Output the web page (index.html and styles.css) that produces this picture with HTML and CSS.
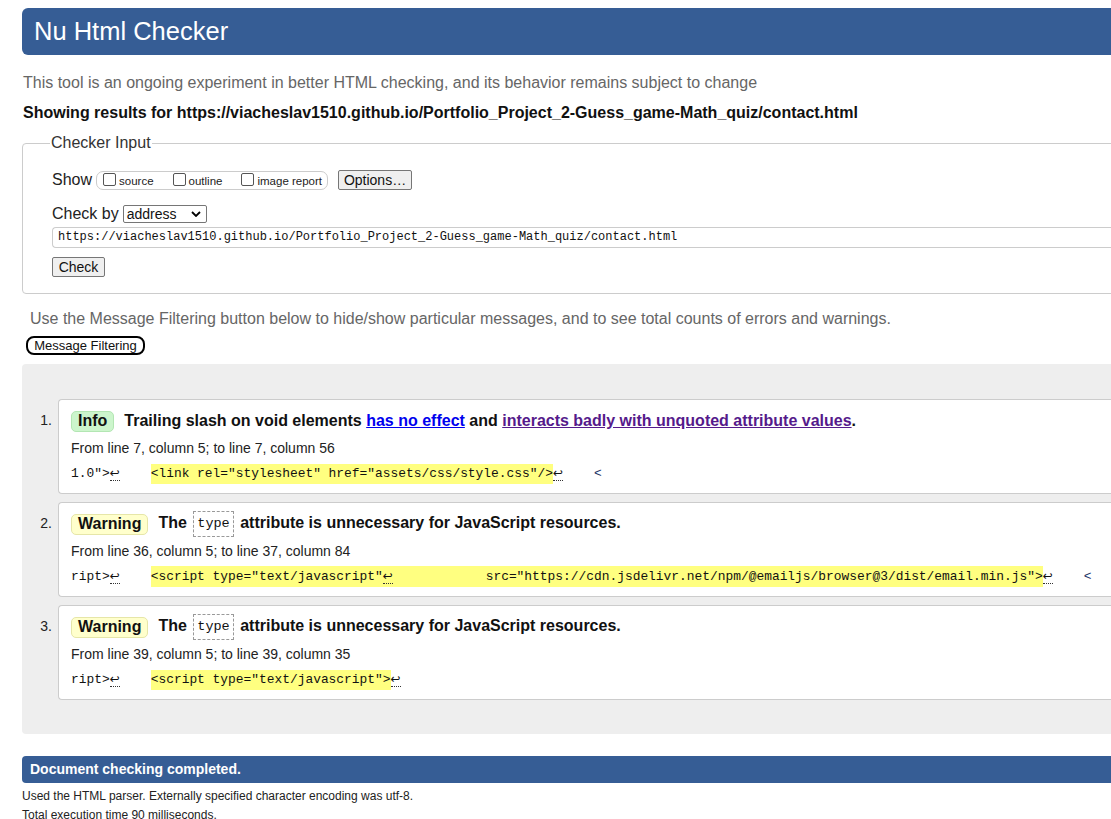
FILE: index.html
```html
<!DOCTYPE html>
<html lang="en">
<head>
<meta charset="utf-8">
<title>Nu Html Checker</title>
<link rel="stylesheet" href="styles.css">
</head>
<body>
<h1 class="title">Nu Html Checker</h1>
<p class="intro">This tool is an ongoing experiment in better HTML checking, and its behavior remains subject to change</p>
<p class="showing">Showing results for https://viacheslav1510.github.io/Portfolio_Project_2-Guess_game-Math_quiz/contact.html</p>

<fieldset class="checker">
  <legend class="legend">Checker Input</legend>
  <div class="show-row">
    <span class="label">Show</span>
    <span class="opts">
      <label class="opt"><span class="cb"></span><span class="opt-text">source</span></label>
      <label class="opt"><span class="cb"></span><span class="opt-text">outline</span></label>
      <label class="opt"><span class="cb"></span><span class="opt-text">image report</span></label>
    </span>
    <span class="btn btn-options">Options…</span>
  </div>
  <div class="by-row">
    <span class="label">Check by</span>
    <span class="select">address<svg class="chev" viewBox="0 0 10 6" width="10" height="6"><path d="M1 1l4 4 4-4" fill="none" stroke="#000" stroke-width="1.8"/></svg></span>
  </div>
  <div class="url-input">https://viacheslav1510.github.io/Portfolio_Project_2-Guess_game-Math_quiz/contact.html</div>
  <div class="check-row"><span class="btn btn-check">Check</span></div>
</fieldset>

<p class="filter-note">Use the Message Filtering button below to hide/show particular messages, and to see total counts of errors and warnings.</p>
<div class="filter-row"><span class="filter-btn">Message Filtering</span></div>

<div class="results">
  <div class="item">
    <span class="num">1.</span>
    <div class="msg">
      <p class="msg-head"><span class="badge badge-info">Info</span><span class="msg-text">Trailing slash on void elements <a class="link" href="#">has no effect</a> and <a class="link visited" href="#">interacts badly with unquoted attribute values</a>.</span></p>
      <p class="loc">From line 7, column 5; to line 7, column 56</p>
      <p class="extract">1.0"&gt;<span class="lf">↩</span>    <span class="hl">&lt;link rel="stylesheet" href="assets/css/style.css"/&gt;</span><span class="lf">↩</span>    <span class="lt">&lt;</span></p>
    </div>
  </div>
  <div class="item">
    <span class="num">2.</span>
    <div class="msg">
      <p class="msg-head"><span class="badge badge-warn">Warning</span><span class="msg-text">The <code class="code-box">type</code> attribute is unnecessary for JavaScript resources.</span></p>
      <p class="loc">From line 36, column 5; to line 37, column 84</p>
      <p class="extract">ript&gt;<span class="lf">↩</span>    <span class="hl">&lt;script type="text/javascript"<span class="lf">↩</span>            src="https://cdn.jsdelivr.net/npm/@emailjs/browser@3/dist/email.min.js"&gt;</span><span class="lf">↩</span>    <span class="lt">&lt;</span></p>
    </div>
  </div>
  <div class="item">
    <span class="num">3.</span>
    <div class="msg">
      <p class="msg-head"><span class="badge badge-warn">Warning</span><span class="msg-text">The <code class="code-box">type</code> attribute is unnecessary for JavaScript resources.</span></p>
      <p class="loc">From line 39, column 5; to line 39, column 35</p>
      <p class="extract">ript&gt;<span class="lf">↩</span>    <span class="hl">&lt;script type="text/javascript"&gt;</span><span class="lf">↩</span></p>
    </div>
  </div>
</div>

<h2 class="done">Document checking completed.</h2>
<p class="details">Used the HTML parser. Externally specified character encoding was utf-8.</p>
<p class="details">Total execution time 90 milliseconds.</p>
</body>
</html>
```
FILE: styles.css
```css
html {
  overflow: hidden;
  background: #fff;
}
body {
  margin: 0;
  padding: 8px 0 40px 22px;
  width: 1120px;
  font-family: "Liberation Sans", Arial, sans-serif;
  color: #111;
}
p { margin: 0; }

.title {
  margin: 0;
  height: 47px;
  line-height: 47px;
  padding-left: 12px;
  background: #365d95;
  color: #fff;
  font-size: 25.5px;
  font-weight: normal;
  border-radius: 6px;
}
.intro {
  margin-top: 18px;
  font-size: 16px;
  line-height: 20px;
  color: #666;
  padding-left: 1px;
}
.showing {
  margin-top: 10px;
  font-size: 16px;
  line-height: 20px;
  font-weight: bold;
  color: #111;
  padding-left: 1px;
}

.checker {
  margin: 10px 0 0 0;
  border: 1px solid #ccc;
  border-radius: 4px;
  padding: 16px 0 16px 29px;
  min-width: 0;
}
.legend {
  font-size: 16px;
  line-height: 20px;
  color: #333;
  padding: 0 1px;
  margin-left: -2px;
}
.label {
  font-size: 16px;
  color: #222;
}
.show-row {
  display: flex;
  align-items: center;
  height: 22px;
}
.opts {
  display: flex;
  align-items: center;
  margin-left: 4px;
  height: 17px;
  border: 1px solid #ccc;
  border-radius: 7px;
  padding: 0 5px 0 6px;
}
.opt {
  display: flex;
  align-items: center;
  font-size: 11.5px;
  color: #222;
  margin-right: 19px;
}
.opt:last-child { margin-right: 0; }
.cb {
  width: 11px;
  height: 11px;
  border: 1px solid #555;
  border-radius: 2px;
  background: #fff;
  margin-right: 3px;
  margin-top: -2px;
}
.opt-text { padding-top: 2px; }
.btn {
  display: inline-flex;
  align-items: center;
  justify-content: center;
  height: 18px;
  border: 1px solid #767676;
  border-radius: 2px;
  background: #efefef;
  font-size: 14px;
  color: #111;
}
.btn-options {
  margin-left: 10px;
  width: 72px;
}
.by-row {
  display: flex;
  align-items: center;
  height: 22px;
  margin-top: 12px;
}
.select {
  display: inline-flex;
  align-items: center;
  justify-content: space-between;
  margin-left: 4px;
  width: 74px;
  height: 16px;
  padding: 0 5px 0 3px;
  border: 1px solid #767676;
  border-radius: 2px;
  background: #fff;
  font-size: 14px;
  color: #111;
}
.chev { display: block; }
.url-input {
  margin-top: 2px;
  height: 19px;
  line-height: 19px;
  border: 1px solid #ccc;
  border-right: 0;
  border-radius: 4px 0 0 4px;
  padding-left: 5px;
  font-family: "Liberation Mono", "DejaVu Sans Mono", monospace;
  font-size: 12px;
  color: #111;
}
.check-row {
  margin-top: 9px;
  display: flex;
}
.btn-check {
  width: 51px;
}

.filter-note {
  margin-top: 15px;
  padding-left: 8px;
  font-size: 16px;
  line-height: 20px;
  color: #666;
}
.filter-row {
  margin-top: 7px;
  padding-left: 4px;
  display: flex;
}
.filter-btn {
  display: inline-flex;
  align-items: center;
  justify-content: center;
  width: 115px;
  height: 15px;
  border: 2px solid #000;
  border-radius: 8px;
  background: #fff;
  font-size: 13px;
  color: #111;
}

.results {
  margin-top: 9px;
  background: #eee;
  border-radius: 4px 0 0 4px;
  padding: 35px 0 34px 0;
  display: flex;
  flex-direction: column;
  gap: 8px;
}
.item {
  display: flex;
  align-items: flex-start;
}
.num {
  width: 36px;
  box-sizing: border-box;
  padding: 11px 6px 0 0;
  text-align: right;
  font-size: 14px;
  line-height: 20px;
  color: #222;
}
.msg {
  flex: 1;
  background: #fff;
  border: 1px solid #ccc;
  border-right: 0;
  border-radius: 4px 0 0 4px;
  padding: 10px 0 9px 12px;
}
.msg-head {
  display: flex;
  align-items: center;
  height: 22px;
}
.badge {
  display: inline-flex;
  align-items: center;
  height: 19px;
  padding: 0 6px;
  border-radius: 5px;
  font-size: 16px;
  font-weight: bold;
  color: #111;
}
.badge-info {
  background: #ccf5cc;
  border: 1px solid #b3e6b3;
}
.badge-warn {
  background: #ffffcc;
  border: 1px solid #e6e6a8;
}
.msg-text {
  margin-left: 10px;
  font-size: 16px;
  font-weight: bold;
  color: #111;
}
.link { color: #0000ee; }
.link.visited { color: #551a8b; }
.code-box {
  display: inline-block;
  font-family: "Liberation Mono", "DejaVu Sans Mono", monospace;
  font-weight: normal;
  font-size: 13.5px;
  line-height: 18px;
  padding: 3px 3px;
  border: 1px dashed #999;
  vertical-align: middle;
  margin: 0 2px;
}
.loc {
  margin-top: 6px;
  font-size: 14px;
  line-height: 20px;
  color: #222;
}
.extract {
  margin-top: 5px;
  font-family: "Liberation Mono", "DejaVu Sans Mono", monospace;
  font-size: 12.9px;
  line-height: 20px;
  white-space: pre;
  color: #111;
}
.hl { background: #ffff80; display: inline-block; }
.lf {
  border-bottom: 1px dotted #333;
  font-family: "DejaVu Sans", sans-serif;
  font-size: 12px;
}
.lt { color: #223366; }

.done {
  margin: 22px 0 0 0;
  height: 27px;
  line-height: 27px;
  padding-left: 8px;
  background: #365d95;
  color: #fff;
  font-size: 14px;
  font-weight: bold;
  border-radius: 4px 0 0 4px;
}
.details {
  font-size: 12px;
  line-height: 19px;
  color: #222;
}
.done + .details { margin-top: 4px; }
```
